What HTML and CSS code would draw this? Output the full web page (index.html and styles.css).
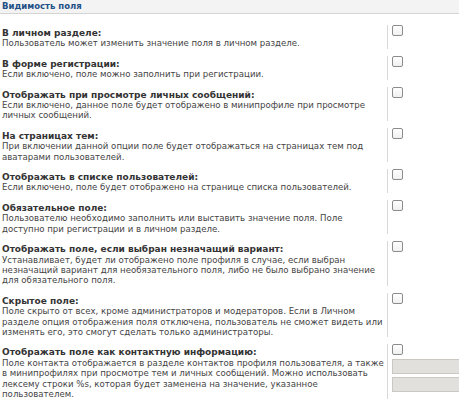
FILE: index.html
```html
<!DOCTYPE html>
<html lang="ru">
<head>
  <meta charset="UTF-8" />
  <title>Видимость поля</title>
  <link rel="stylesheet" href="styles.css">
</head>
<body>
  <fieldset class="panel">
    <div class="legend">Видимость поля</div>

    <dl class="opt">
      <dt><label>В личном разделе:</label><span>Пользователь может изменить значение поля в личном разделе.</span></dt>
      <dd><input type="checkbox" /></dd>
    </dl>
    <dl class="opt">
      <dt><label>В форме регистрации:</label><span>Если включено, поле можно заполнить при регистрации.</span></dt>
      <dd><input type="checkbox" /></dd>
    </dl>
    <dl class="opt">
      <dt><label>Отображать при просмотре личных сообщений:</label><span>Если включено, данное поле будет отображено в минипрофиле при просмотре личных сообщений.</span></dt>
      <dd><input type="checkbox" /></dd>
    </dl>
    <dl class="opt">
      <dt><label>На страницах тем:</label><span>При включении данной опции поле будет отображаться на страницах тем под аватарами пользователей.</span></dt>
      <dd><input type="checkbox" /></dd>
    </dl>
    <dl class="opt">
      <dt><label>Отображать в списке пользователей:</label><span>Если включено, поле будет отображено на странице списка пользователей.</span></dt>
      <dd><input type="checkbox" /></dd>
    </dl>
    <dl class="opt">
      <dt><label>Обязательное поле:</label><span>Пользователю необходимо заполнить или выставить значение поля. Поле доступно при регистрации и в личном разделе.</span></dt>
      <dd><input type="checkbox" /></dd>
    </dl>
    <dl class="opt">
      <dt><label>Отображать поле, если выбран незначащий вариант:</label><span>Устанавливает, будет ли отображено поле профиля в случае, если выбран незначащий вариант для необязательного поля, либо не было выбрано значение для обязательного поля.</span></dt>
      <dd><input type="checkbox" /></dd>
    </dl>
    <dl class="opt">
      <dt><label>Скрытое поле:</label><span>Поле скрыто от всех, кроме администраторов и модераторов. Если в Личном разделе опция отображения поля отключена, пользователь не сможет видеть или изменять его, это смогут сделать только администраторы.</span></dt>
      <dd><input type="checkbox" /></dd>
    </dl>
    <dl class="opt">
      <dt><label>Отображать поле как контактную информацию:</label><span>Поле контакта отображается в разделе контактов профиля пользователя, а также в минипрофилях при просмотре тем и личных сообщений. Можно использовать лексему строки %s, которая будет заменена на значение, указанное пользователем.</span></dt>
      <dd>
        <input type="checkbox" />
        <input type="text" class="text" disabled />
        <input type="text" class="text" disabled />
      </dd>
    </dl>
  </fieldset>
</body>
</html>
```

FILE: styles.css
```css
html, body {
  margin: 0;
  padding: 0;
  overflow: hidden;
  background-color: #fff;
}
body {
  font-family: "DejaVu Sans", Verdana, sans-serif;
  font-size: 9px;
  color: #333;
}
/* Блок настроек */
.panel {
  width: 540px;
  margin: 0;
  padding: 0;
  border: none;
}
.legend {
  background-color: #f3f3f3;
  border-bottom: 1px solid #d4d4d4;
  color: #1d4f86;
  font-weight: bold;
  font-size: 8.5px;
  line-height: 13px;
  padding: 0 0 0 2px;
  margin-bottom: 11px;
}
/* Строка: описание слева, поле справа */
.opt {
  display: flex;
  margin: 0 0 7px 0;
}
.opt dt {
  width: 388px;
  box-sizing: border-box;
  padding: 3px 0 0 2px;
  border-right: 1px solid #d8d8d8;
  line-height: 10.4px;
}
.opt dt label {
  display: block;
  font-weight: bold;
  color: #333;
}
.opt dt span {
  display: block;
  font-size: 8.6px;
  color: #444;
}
.opt dd {
  margin: 0;
  padding-left: 4px;
  flex: 1;
}
input[type="checkbox"] {
  appearance: none;
  display: block;
  width: 11px;
  height: 11px;
  margin: 0;
  border: 1px solid #8c8c8c;
  border-radius: 2px;
  background: linear-gradient(#fff, #f0f0f0);
}
input.text {
  display: block;
  width: 140px;
  height: 15px;
  box-sizing: border-box;
  margin: 4px 0 0 0;
  border: 1px solid #cbc8c3;
  background-color: #e2e0dc;
}
input.text + input.text {
  margin-top: 3px;
}
```
